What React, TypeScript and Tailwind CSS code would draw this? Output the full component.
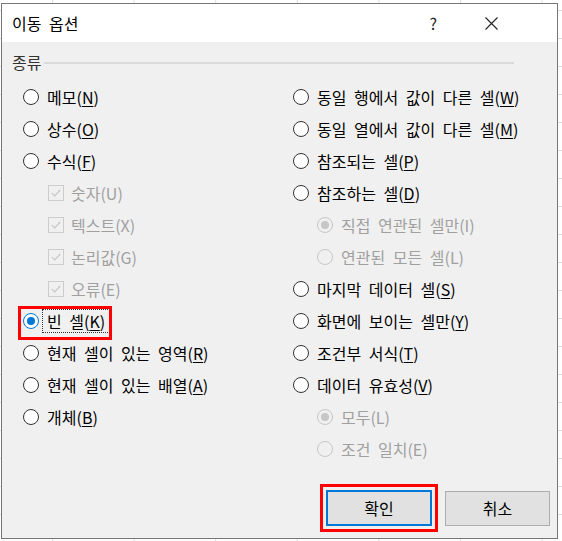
import React from "react";

type Item = {
  label: string;
  key?: string;
  kind: "radio" | "check" | "sub";
  checked?: boolean;
  disabled?: boolean;
  highlight?: boolean;
};

const leftItems: Item[] = [
  { label: "메모", key: "N", kind: "radio" },
  { label: "상수", key: "O", kind: "radio" },
  { label: "수식", key: "F", kind: "radio" },
  { label: "숫자(U)", kind: "check", checked: true, disabled: true },
  { label: "텍스트(X)", kind: "check", checked: true, disabled: true },
  { label: "논리값(G)", kind: "check", checked: true, disabled: true },
  { label: "오류(E)", kind: "check", checked: true, disabled: true },
  { label: "빈 셀", key: "K", kind: "radio", checked: true, highlight: true },
  { label: "현재 셀이 있는 영역", key: "R", kind: "radio" },
  { label: "현재 셀이 있는 배열", key: "A", kind: "radio" },
  { label: "개체", key: "B", kind: "radio" },
];

const rightItems: Item[] = [
  { label: "동일 행에서 값이 다른 셀", key: "W", kind: "radio" },
  { label: "동일 열에서 값이 다른 셀", key: "M", kind: "radio" },
  { label: "참조되는 셀", key: "P", kind: "radio" },
  { label: "참조하는 셀", key: "D", kind: "radio" },
  { label: "직접 연관된 셀만(I)", kind: "sub", checked: true, disabled: true },
  { label: "연관된 모든 셀(L)", kind: "sub", disabled: true },
  { label: "마지막 데이터 셀", key: "S", kind: "radio" },
  { label: "화면에 보이는 셀만", key: "Y", kind: "radio" },
  { label: "조건부 서식", key: "T", kind: "radio" },
  { label: "데이터 유효성", key: "V", kind: "radio" },
  { label: "모두(L)", kind: "sub", checked: true, disabled: true },
  { label: "조건 일치(E)", kind: "sub", disabled: true },
];

function Radio({ checked, disabled }: { checked?: boolean; disabled?: boolean }) {
  if (disabled) {
    return (
      <span className="w-4 h-4 shrink-0 rounded-full border border-[#c6c6c6] bg-[#f0f0f0] flex items-center justify-center">
        {checked && <span className="w-2 h-2 rounded-full bg-[#c6c6c6]" />}
      </span>
    );
  }
  if (checked) {
    return (
      <span className="w-4 h-4 shrink-0 rounded-full border border-[#0078d7] bg-white flex items-center justify-center">
        <span className="w-2 h-2 rounded-full bg-[#0078d7]" />
      </span>
    );
  }
  return <span className="w-4 h-4 shrink-0 rounded-full border border-[#333333] bg-white" />;
}

function Check() {
  return (
    <span className="w-4 h-4 shrink-0 border border-[#cccccc] bg-[#f0f0f0] flex items-center justify-center">
      <svg width="12" height="12" viewBox="0 0 12 12">
        <path d="M2 6.2 L4.8 9 L10.2 3" fill="none" stroke="#c6c6c6" strokeWidth="1.2" />
      </svg>
    </span>
  );
}

function Row({ item }: { item: Item }) {
  const text = item.disabled ? "text-[#a0a0a0]" : "text-black";
  const label = item.key ? (
    <>
      {item.label}(<span className="underline underline-offset-2">{item.key}</span>)
    </>
  ) : (
    item.label
  );

  if (item.kind === "check") {
    return (
      <div className="h-8 flex items-center pl-[25px] gap-[7px]">
        <Check />
        <span className={text}>{label}</span>
      </div>
    );
  }

  const indent = item.kind === "sub" ? "pl-6" : "";
  return (
    <div className={`h-8 flex items-center gap-2 relative ${indent}`}>
      <Radio checked={item.checked} disabled={item.disabled} />
      {item.highlight ? (
        <span className="outline outline-1 outline-dotted outline-[#333] outline-offset-[3px] -ml-[1px] pl-[1px] pr-[1px]">
          <span className={text}>{label}</span>
        </span>
      ) : (
        <span className={text}>{label}</span>
      )}
      {item.highlight && (
        <span className="absolute -left-[5px] top-[1px] w-[94px] h-[34px] border-[3px] border-[#ff0000] pointer-events-none" />
      )}
    </div>
  );
}

export default function App() {
  return (
    <div
      className="w-[562px] h-[541px] overflow-hidden pt-[3px] pl-[1px] bg-white bg-[linear-gradient(to_right,#dcdcdc_1px,transparent_1px),linear-gradient(to_bottom,#dcdcdc_1px,transparent_1px)] bg-[size:81.6px_28px] bg-[position:52px_10px]"
      style={{ fontFamily: '"Noto Sans CJK KR", "Noto Sans", sans-serif' }}
    >
      <div className="w-[557px] h-[536px] border border-[#777777] flex flex-col text-[16px] leading-none [word-spacing:4px]">
        {/* Title bar */}
        <div className="h-[38px] bg-white flex items-center pl-[10px] shrink-0">
          <span className="text-[16px] text-black mt-[-1px]">이동 옵션</span>
          <span className="ml-auto mr-[48px] text-[16px] text-[#222]">?</span>
          <svg className="mr-[59px]" width="13" height="13" viewBox="0 0 13 13">
            <path d="M0.5 0.5 L12.5 12.5 M12.5 0.5 L0.5 12.5" stroke="#222" strokeWidth="1.1" />
          </svg>
        </div>

        {/* Body */}
        <div className="flex-1 bg-[#f0f0f0] flex flex-col">
          <div className="h-5 mt-[10px] flex items-center pl-[10px] pr-[43px] gap-[3px]">
            <span className="text-[#333]">종류</span>
            <span className="flex-1 h-[2px] bg-[#dadada] mt-[1px]" />
          </div>

          <div className="mt-[9px] pl-[21px] grid grid-cols-[270px_1fr]">
            <div className="flex flex-col">
              {leftItems.map((it) => (
                <Row key={it.label} item={it} />
              ))}
            </div>
            <div className="flex flex-col">
              {rightItems.map((it) => (
                <Row key={it.label} item={it} />
              ))}
            </div>
          </div>

          <div className="mt-auto mb-[6px] flex items-center justify-end pr-[7px] gap-[7px]">
            <div className="border-[3px] border-[#ff0000] p-[3px]">
              <button className="w-[106px] h-[36px] bg-[#e1e1e1] border-2 border-[#0078d7] text-black text-[16px]">
                확인
              </button>
            </div>
            <button className="w-[105px] h-[35px] bg-[#e1e1e1] border border-[#adadad] text-black text-[16px]">
              취소
            </button>
          </div>
        </div>
      </div>
    </div>
  );
}
